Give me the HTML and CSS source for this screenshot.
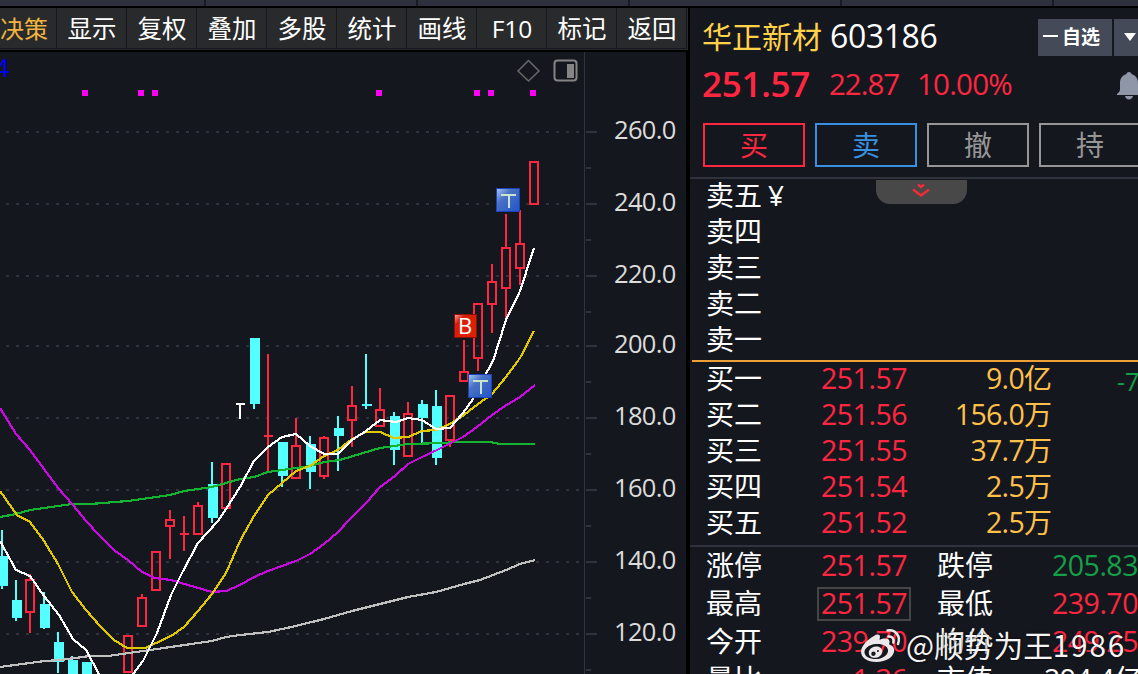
FILE: index.html
```
<!DOCTYPE html>
<html lang="zh-CN">
<head>
  <meta charset="UTF-8">
  <meta name="viewport" content="width=device-width, initial-scale=1.0">
  <title>华正新材 603186</title>
  <link rel="stylesheet" href="styles.css">
</head>
<body>
  <div class="tabs">
    <span class="tab first"></span><span class="tab"></span><span class="tab"></span><span class="tab"></span><span class="tab"></span><span class="tab last"></span>
  </div>
  <div class="main">
    <div class="left">
      <div class="toolbar">
        <div class="tool active">决策</div>
        <div class="tool">显示</div>
        <div class="tool">复权</div>
        <div class="tool">叠加</div>
        <div class="tool">多股</div>
        <div class="tool">统计</div>
        <div class="tool">画线</div>
        <div class="tool">F10</div>
        <div class="tool">标记</div>
        <div class="tool">返回</div>
      </div>
      <svg class="chart" width="686" height="622" viewBox="0 52 686 622">
        <defs>
          <linearGradient id="blue" x1="0" y1="0" x2="1" y2="1">
            <stop offset="0" stop-color="#a9c8f4"/>
            <stop offset="0.35" stop-color="#4a72c4"/>
            <stop offset="1" stop-color="#1f55c8"/>
          </linearGradient>
          <linearGradient id="red" x1="0" y1="0" x2="1" y2="1">
            <stop offset="0" stop-color="#f0b0a8"/>
            <stop offset="0.25" stop-color="#d81e08"/>
            <stop offset="1" stop-color="#e02000"/>
          </linearGradient>
        </defs>

        <!-- 网格 -->
        <path class="grid" d="M6 132H584M6 204H584M6 276H584M6 346H584M6 418H584M6 490H584M6 562H584M6 634H584"/>
        <path class="axis" d="M584 52V96M584.5 96V674"/>
        <path class="tick" d="M586 132h11M586 204h11M586 276h11M586 346h11M586 418h11M586 490h11M586 562h11M586 634h11M586 168h5M586 240h5M586 312h5M586 382h5M586 454h5M586 526h5M586 598h5M586 670h5"/>
        <g class="scale">
          <text x="614" y="139">260.0</text>
          <text x="614" y="211">240.0</text>
          <text x="614" y="283">220.0</text>
          <text x="614" y="353">200.0</text>
          <text x="614" y="425">180.0</text>
          <text x="614" y="497">160.0</text>
          <text x="614" y="569">140.0</text>
          <text x="614" y="641">120.0</text>
        </g>

        <text class="period" x="-5" y="77">4</text>
        <path class="mark" d="M82 90h6v6h-6zM138 90h6v6h-6zM152 90h6v6h-6zM376 90h6v6h-6zM474 90h6v6h-6zM488 90h6v6h-6zM530 90h6v6h-6z"/>
        <path class="diamond" d="M528.5 60.5L539 71L528.5 81L518 71z"/>
        <rect class="panel-icon" x="554.5" y="60.5" width="22" height="20" rx="3"/>
        <rect class="panel-fill" x="567" y="63.500" width="7" height="14"/>

        <!-- 跌 -->
        <path class="down" d="M0 556h8v30H0zM1 530h2v59h-2zM12 600h10v18H12zM15 580h2v41h-2zM40 604h10v24H40zM43 592h2v37h-2zM54 642h10v20H54zM57 632h2v41h-2zM68 660h10v14H68zM71 656h2v10h-2zM82 662h10v12H82z
          M208 484h10v34h-10zM211 462h2v61h-2zM250 338h10v66h-10zM253 400h2v9h-2zM278 442h10v34h-10zM281 470h2v17h-2zM306 444h10v28h-10zM309 436h2v53h-2zM334 428h10v8h-10zM337 416h2v55h-2zM362 404h10v2h-10zM365 354h2v55h-2z
          M390 416h10v34h-10zM393 412h2v53h-2zM418 404h10v14h-10zM421 400h2v43h-2zM432 406h10v52h-10zM435 390h2v75h-2z"/>
        <path class="flat" d="M236 403h9v2h-9zM239 403h2v16h-2z"/>

        <!-- 涨 -->
        <path class="up" d="M26 580h8v32h-8zM30 574v5M30 613v20M124 636h8v36h-8zM138 598h8v28h-8zM142 594v3M152 552h8v38h-8zM166 520h8v6h-8zM170 510v9M170 527v32M180 534h9M184 516v35M194 506h8v28h-8zM198 502v3M222 464h8v44h-8z
          M264 436h9M268 354v117M292 446h8v32h-8zM296 418v27M320 438h8v38h-8zM324 436v2M324 477v2M348 406h8v14h-8zM352 386v19M352 421v26M376 410h8v16h-8zM380 388v21M404 414h8v42h-8zM408 402v11M446 396h8v44h-8zM450 441v6
          M460 372h8v9h-8zM464 340v31M474 304h8v54h-8zM478 359v12M488 282h8v22h-8zM492 264v17M492 305v28M502 248h8v40h-8zM506 214v33M506 289v30M516 244h8v24h-8zM520 210v33M520 269v16M530 162h8v42h-8z"/>

        <!-- 均线 -->
        <polyline class="ma gray" points="0,667 45,661 60,660 90,656 108,656 150,650 212,641 226,637 240,635 268,632 296,626 324,619 352,611 380,604 408,597 436,592 464,584 480,580 506,570 520,564 535,560"/>
        <polyline class="ma green" points="0,517 16,514 30,510 72,504 90,504 128,501 170,495 184,491 212,487 226,483 240,479 254,477 268,472 310,466 324,462 340,460 380,448 408,444 443,443 456,442 490,442 500,444 535,444"/>
        <polyline class="ma purple" points="0,408 16,434 30,450 58,488 73,505 86,521 100,536 115,551 128,560 142,572 155,578 171,580 212,592 226,591 240,585 254,577 268,571 296,561 310,554 324,544 338,532 349,520 367,502 380,487 395,476 408,464 422,457 435,451 451,443 463,437 477,427 492,415 505,406 520,397 535,385"/>
        <polyline class="ma yellow" points="0,491 17,515 30,522 44,541 58,564 72,592 86,610 100,626 114,640 127,648 145,648 156,643 171,636 184,627 198,611 212,594 226,573 240,541 254,516 268,495 282,483 296,471 310,466 324,456 338,450 352,439 366,432 380,432 394,438 408,437 422,431 436,430 450,424 464,415 478,404 492,394 506,377 520,358 534,331"/>
        <polyline class="ma white" points="0,541 16,570 30,576 44,596 59,615 73,639 86,650 99,674"/>
        <polyline class="ma white" points="133,674 143,661 157,633 171,595 183,571 198,543 218,521 226,509 240,487 254,461 268,447 282,437 296,434 310,446 324,454 338,454 352,440 366,431 380,420 396,422 408,418 422,420 436,429 450,428 463,413 473,399 488,370 493,361 506,320 520,291 534,248"/>

        <!-- 买卖点 -->
        <rect x="496.500" y="188.500" width="23" height="23" fill="url(#blue)" stroke="#1f40b8"/>
        <path class="t-mark" d="M501 195h15M508.500 195v13"/>
        <rect x="468.500" y="374.500" width="23" height="23" fill="url(#blue)" stroke="#1f40b8"/>
        <path class="t-mark" d="M473 381h15M480.500 381v13"/>
        <rect x="454.500" y="314.500" width="22" height="23" rx="1" fill="url(#red)" stroke="#8c1008"/>
        <text class="b-mark" x="458" y="334">B</text>
      </svg>
    </div>

    <div class="quote">
      <div class="head">
        <span class="name">华正新材</span>
        <span class="code">603186</span>
        <div class="fav">
          <div class="fav-text"><i class="minus"></i>自选</div>
          <div class="fav-more"><i class="caret"></i></div>
        </div>
      </div>
      <div class="price-row">
        <span class="price">251.57</span>
        <span class="change">22.87</span>
        <span class="percent">10.00%</span>
        <svg class="bell" width="24" height="28" viewBox="0 0 24 28">
          <path d="M12 0c1.500 0 2.500 1 2.800 2.300C19 3.500 21 7 21 11v6c0 2 1 3.500 3 5v1H0v-1c2-1.500 3-3 3-5v-6c0-4 2-7.500 6.200-8.700C9.500 1 10.500 0 12 0zM8 24h8c-.5 2-2 3.500-4 3.500S8.500 26 8 24z"/>
        </svg>
      </div>
      <div class="actions">
        <div class="btn buy">买</div>
        <div class="btn sell">卖</div>
        <div class="btn">撤</div>
        <div class="btn">持</div>
      </div>

      <div class="book asks">
        <div class="row"><span class="label">卖五<span class="yen">¥</span></span></div>
        <div class="row"><span class="label">卖四</span></div>
        <div class="row"><span class="label">卖三</span></div>
        <div class="row"><span class="label">卖二</span></div>
        <div class="row"><span class="label">卖一</span></div>
        <div class="handle">
          <svg width="20" height="16" viewBox="0 0 20 16"><path d="M7 1.500l3 2.500 3-2.500M2 6.500l8 6 8-6"/></svg>
        </div>
      </div>
      <div class="book bids">
        <div class="row"><span class="label">买一</span><span class="val">251.57</span><span class="vol">9.0<b>亿</b></span><span class="diff">-7</span></div>
        <div class="row"><span class="label">买二</span><span class="val">251.56</span><span class="vol">156.0<b>万</b></span></div>
        <div class="row"><span class="label">买三</span><span class="val">251.55</span><span class="vol">37.7<b>万</b></span></div>
        <div class="row"><span class="label">买四</span><span class="val">251.54</span><span class="vol">2.5<b>万</b></span></div>
        <div class="row"><span class="label">买五</span><span class="val">251.52</span><span class="vol">2.5<b>万</b></span></div>
      </div>
      <div class="info">
        <div class="row"><span class="label">涨停</span><span class="val">251.57</span><span class="label2">跌停</span><span class="val2 fall">205.83</span></div>
        <div class="row"><span class="label">最高</span><span class="val boxed">251.57</span><span class="label2">最低</span><span class="val2">239.70</span></div>
        <div class="row"><span class="label">今开</span><span class="val">239.70</span><span class="label2">均价</span><span class="val2">249.25</span></div>
        <div class="row"><span class="label">量比</span><span class="val">1.36</span><span class="label2">市值</span><span class="val2 cap">294.4<b>亿</b></span></div>
      </div>
    </div>
  </div>

  <div class="watermark">
    <svg width="42" height="36" viewBox="0 0 42 36">
      <path d="M14 8c3-2 6-2 6 1l-.5 3c4-2 9-2 10 1 .4 1.500-.5 2.500-.3 3.500 2 .7 5 2 5 6C34 29 26 34 16.500 34S1 29.500 1 23.500C1 18 8 11 14 8zM16 16c-7 .5-12 4.500-11.500 8.500.4 4.500 6 7 12.500 6.500s11.500-4.500 11-9c-.4-4-5.500-6.500-12-6z"/>
      <path d="M15.500 18.500c-4 .5-7 3.500-6.700 6.700.3 3.200 3.500 5 7.200 4.500s6.600-3.500 6.300-6.700c-.3-3-3.300-5-6.800-4.500zM13.500 23.500a2.200 2.200 0 1 1-.1 4.400 2.200 2.200 0 0 1 .1-4.400zM18 22a1 1 0 1 1-.1 2 1 1 0 0 1 .1-2z"/>
      <path class="wave" d="M28.500 8.500c3.500-.6 6 2.500 4.800 6M27.500 2.500c8-1.500 13.500 6 10.500 13.500"/>
    </svg>
    <span>@顺势为王<span class="num">1986</span></span>
  </div>
</body>
</html>
```
FILE: styles.css
```
* {
  box-sizing: border-box;
}
body {
  margin: 0;
  width: 1138px;
  height: 674px;
  overflow: hidden;
  position: relative;
  background: #15171e;
  color: #fff;
  font-family: "Open Sans", "Noto Sans CJK SC", sans-serif;
}
i {
  font-style: normal;
}
b {
  font-weight: normal;
  letter-spacing: 0;
}

/* 顶部标签条 */
.tabs {
  display: flex;
  height: 8px;
  background: #2e313d;
  border-bottom: 2px solid #000;
}
.tab {
  flex: none;
  width: 212px;
  border-right: 2px solid #191b23;
}
.tab.first {
  width: 206px;
}
.tab.last {
  flex: 1;
  width: auto;
  border-right: 0;
}
.main {
  display: flex;
  height: 666px;
}

/* 左侧 */
.left {
  flex: none;
  width: 690px;
  background: #000;
}
.toolbar {
  display: flex;
  height: 44px;
  width: 688px;
  border-bottom: 2px solid #000;
  background: #282a2c;
  overflow: hidden;
}
.tool {
  flex: none;
  width: 70px;
  height: 41px;
  padding-left: 1px;
  border-right: 1px solid #15171e;
  border-bottom: 1px solid #15171e;
  font-size: 24.5px;
  line-height: 41px;
  text-align: center;
  white-space: nowrap;
}
.tool.active {
  width: 57px;
  padding-left: 0;
  text-align: left;
  font-size: 24px;
  color: #f0b440;
}
.chart {
  display: block;
  background: #15171e;
  shape-rendering: crispEdges;
}
.grid {
  stroke: #30323d;
  stroke-width: 2;
  stroke-dasharray: 3 7;
}
.axis {
  stroke: #30323d;
  stroke-width: 1;
  fill: none;
}
.tick {
  stroke: #30323d;
  stroke-width: 2;
}
.scale {
  fill: #dcdcdc;
  font-size: 25.5px;
  letter-spacing: -0.7px;
}
.period {
  fill: #00f;
  font-size: 25px;
}
.mark {
  fill: #f0f;
}
.diamond {
  fill: none;
  stroke: #686868;
  stroke-width: 1.5;
  shape-rendering: auto;
}
.panel-icon {
  fill: none;
  stroke: #858585;
  stroke-width: 2;
  shape-rendering: auto;
}
.panel-fill {
  fill: #858585;
}
.down {
  fill: #54ffff;
}
.up {
  fill: none;
  stroke: #ff2640;
  stroke-width: 2;
}
.flat {
  fill: #fff;
}
.ma {
  fill: none;
  stroke-width: 2.2;
}
.gray { stroke: #c0c0c0; }
.green { stroke: #14b432; }
.purple { stroke: #c80ae0; }
.yellow { stroke: #e0c800; }
.white { stroke: #fff; }
.t-mark {
  stroke: #c8e4cc;
  stroke-width: 2;
}
.b-mark {
  fill: #fff;
  font-size: 22px;
}

/* 右侧盘口 */
.quote {
  flex: none;
  width: 448px;
  overflow: hidden;
  background: #15171e;
}
.head {
  display: flex;
  align-items: center;
  height: 54px;
  padding-left: 12px;
}
.name {
  flex: none;
  width: 128px;
  font-size: 30px;
  color: #ffd24a;
  white-space: nowrap;
}
.code {
  flex: none;
  width: 208px;
  font-size: 32px;
  letter-spacing: -0.4px;
}
.fav {
  display: flex;
  flex: none;
  gap: 2px;
  margin-top: 4px;
}
.fav-text,
.fav-more {
  display: flex;
  align-items: center;
  height: 37px;
  background: #444a58;
}
.fav-text {
  width: 74px;
  padding: 0 0 2px 5px;
  gap: 4px;
  font-size: 19px;
  font-weight: bold;
}
.minus {
  width: 15px;
  height: 2px;
  background: #fff;
}
.fav-more {
  width: 24px;
  padding-left: 10px;
}
.caret {
  border: 6px solid transparent;
  border-top: 8px solid #fff;
  border-bottom: 0;
}
.price-row {
  display: flex;
  align-items: center;
  height: 46px;
  padding-left: 12px;
  color: #ff2640;
  white-space: nowrap;
}
.price,
.change,
.percent {
  flex: none;
  padding-bottom: 3px;
}
.price {
  width: 127px;
  font-size: 35px;
  font-weight: 600;
  letter-spacing: -0.3px;
}
.change {
  width: 88px;
  font-size: 29.5px;
  letter-spacing: -1px;
}
.percent {
  width: 200px;
  font-size: 29.5px;
  letter-spacing: -0.8px;
}
.bell {
  flex: none;
  margin-top: 2px;
  fill: #8f96a8;
}
.actions {
  display: flex;
  gap: 10px;
  height: 71px;
  padding: 15px 0 12px 13px;
  border-bottom: 2px solid #30323d;
}
.btn {
  flex: none;
  width: 102px;
  height: 44px;
  border: 2px solid #969696;
  color: #969696;
  font-size: 28px;
  line-height: 40px;
  text-align: center;
}
.btn.buy {
  border-color: #ff2640;
  color: #ff2640;
}
.btn.sell {
  border-color: #3a90e0;
  color: #3a90e0;
}
.book,
.info {
  font-size: 28px;
}
.row {
  display: flex;
  align-items: center;
  height: 36px;
  padding-left: 16px;
  line-height: 36px;
  white-space: nowrap;
}
.book .row {
  padding-bottom: 4px;
}
.label {
  flex: none;
  width: 111px;
}
.yen {
  margin-left: 6px;
}
.asks {
  position: relative;
  height: 183px;
  margin-left: 2px;
  border-bottom: 2px solid #eca035;
}
.asks .row {
  padding-left: 14px;
}
.handle {
  position: absolute;
  left: 184px;
  top: 1px;
  width: 91px;
  height: 24px;
  padding-right: 2px;
  border-radius: 0 0 14px 14px;
  background: #484848;
  text-align: center;
  line-height: 17px;
}
.handle path {
  fill: none;
  stroke: #f02c38;
  stroke-width: 2.5;
}
.bids {
  height: 185px;
  border-bottom: 2px solid #30323d;
}
.val {
  flex: none;
  width: 94px;
  padding-right: 4px;
  color: #ff2640;
  font-size: 28.5px;
  letter-spacing: -0.5px;
  text-align: right;
}
.boxed {
  height: 34px;
  border: 2px solid #454545;
  line-height: 28px;
  padding-right: 2px;
}
.vol {
  flex: none;
  width: 141px;
  color: #ffc04a;
  font-size: 28.5px;
  letter-spacing: -0.7px;
  text-align: right;
}
.vol b {
  font-size: 28px;
}
.diff {
  margin: 5px 0 0 65px;
  color: #14a048;
  font-size: 25px;
}
.info .row {
  height: 38px;
  padding-bottom: 2px;
}
.info .boxed {
  margin-top: 1px;
}
.label2 {
  flex: none;
  width: 115px;
  margin-left: 26px;
}
.val2 {
  color: #ff2640;
  font-size: 28.5px;
  letter-spacing: -0.5px;
}
.fall {
  color: #14a048;
}
.cap {
  margin-left: -8px;
  color: #fff;
}

/* 水印 */
.watermark {
  position: absolute;
  left: 860px;
  top: 625px;
  display: flex;
  align-items: center;
  gap: 4px;
  font-family: "Noto Sans CJK SC", sans-serif;
  font-size: 29.7px;
  line-height: 40px;
  color: #f4f4f4;
  white-space: nowrap;
  text-shadow: 0 0 3px rgba(0, 0, 0, 0.8);
}
.watermark svg {
  margin-top: 1px;
}
.watermark .num {
  letter-spacing: 1.8px;
}
.watermark path {
  fill: #ece8ea;
  fill-rule: evenodd;
}
.watermark .wave {
  fill: none;
  stroke: #ece8ea;
  stroke-width: 2.5;
  stroke-linecap: round;
}
```
